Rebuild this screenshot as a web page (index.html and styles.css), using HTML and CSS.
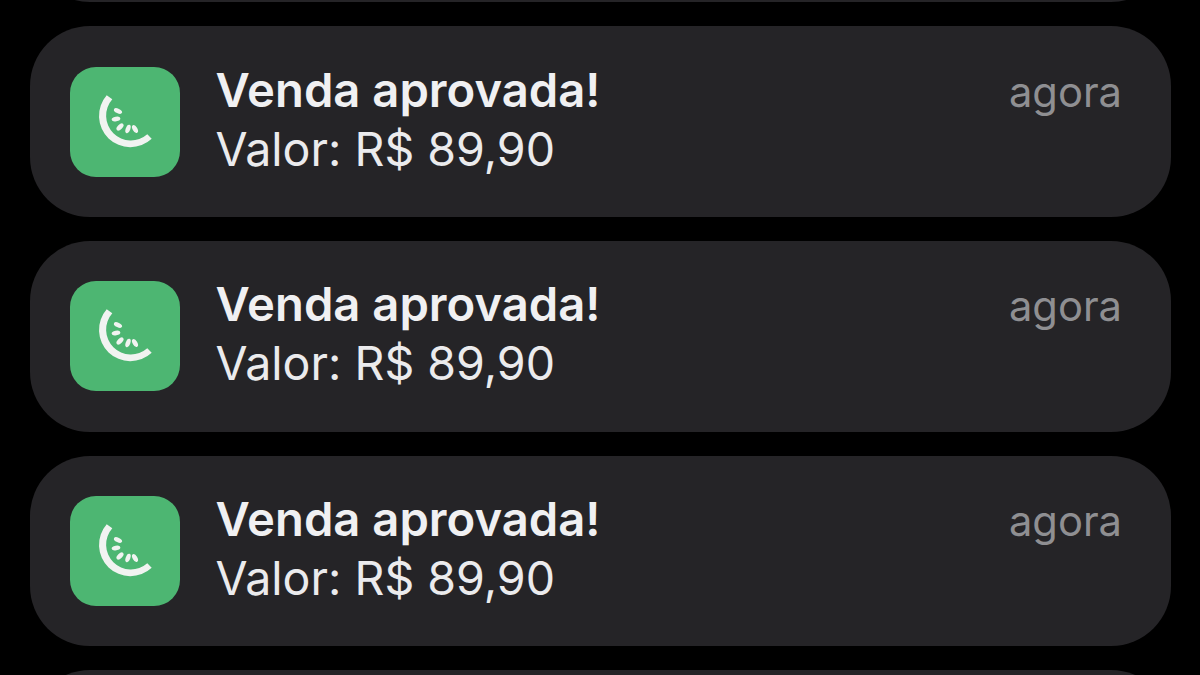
FILE: index.html
```html
<!DOCTYPE html>
<html lang="en">
<head>
    <meta charset="UTF-8">
    <meta name="viewport" content="width=device-width, initial-scale=1.0">
    <title>Notificações</title>
    <link rel="stylesheet" href="styles.css">
</head>
<body>
    <svg class="sprite" width="0" height="0">
        <symbol id="melon" viewBox="0 0 110 110">
            <path d="M36.7 28.3 A31.3 31.3 0 0 0 81.7 71.7 L77.3 67.3 A24.8 24.8 0 0 1 42.3 32.3 Z" fill="#f1f3f1"/>
            <ellipse cx="48" cy="44" rx="4.4" ry="2.3" transform="rotate(25 48 44)" fill="#f1f3f1"/>
            <ellipse cx="46" cy="52" rx="4.4" ry="2.3" transform="rotate(-10 46 52)" fill="#f1f3f1"/>
            <ellipse cx="50" cy="60" rx="4.4" ry="2.3" transform="rotate(-45 50 60)" fill="#f1f3f1"/>
            <ellipse cx="58" cy="62" rx="4.4" ry="2.3" transform="rotate(-70 58 62)" fill="#f1f3f1"/>
            <ellipse cx="65" cy="62" rx="4.4" ry="2.3" transform="rotate(60 65 62)" fill="#f1f3f1"/>
        </symbol>
    </svg>

    <div class="screen">
        <div class="list">
            <div class="card"></div>

            <div class="card">
                <svg class="app-icon"><use href="#melon"/></svg>
                <div class="text">
                    <div class="title">Venda aprovada!</div>
                    <div class="value">Valor: R$ 89,90</div>
                </div>
                <span class="time">agora</span>
            </div>

            <div class="card">
                <svg class="app-icon"><use href="#melon"/></svg>
                <div class="text">
                    <div class="title">Venda aprovada!</div>
                    <div class="value">Valor: R$ 89,90</div>
                </div>
                <span class="time">agora</span>
            </div>

            <div class="card">
                <svg class="app-icon"><use href="#melon"/></svg>
                <div class="text">
                    <div class="title">Venda aprovada!</div>
                    <div class="value">Valor: R$ 89,90</div>
                </div>
                <span class="time">agora</span>
            </div>

            <div class="card"></div>
        </div>
    </div>
</body>
</html>
```

FILE: styles.css
```css
body { margin: 0; background: #000; font-family: Inter, "Noto Sans", sans-serif; }
.sprite { position: absolute; }
.screen { height: 675px; overflow: hidden; }
.list { display: flex; flex-direction: column; gap: 24px; margin-top: -188.5px; padding: 0 29px 0 30px; }
.card { display: flex; align-items: flex-start; flex: none; box-sizing: border-box; height: 190.7px; padding: 40.5px 49px 0 40px; background: #252427; border-radius: 60px; }
.app-icon { flex: none; width: 110px; height: 110px; background: #4db672; border-radius: 26px; }
.text { flex: 1; margin-left: 35.5px; margin-top: -7px; }
.title { font-size: 47.2px; line-height: 60px; font-weight: 600; color: #f0f0f2; }
.value { font-size: 46.5px; line-height: 59px; font-weight: 400; color: #ebebed; }
.time { font-size: 41.7px; line-height: 52px; color: #8f8f92; margin-top: -1px; }
```
